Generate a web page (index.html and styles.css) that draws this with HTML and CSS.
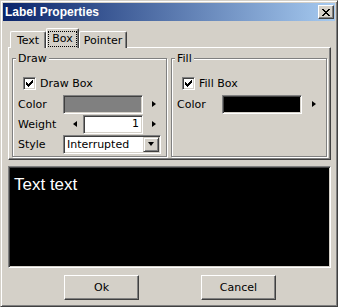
FILE: index.html
```html
<!DOCTYPE html>
<html lang="en">
<head>
  <meta charset="UTF-8" />
  <title>Label Properties</title>
  <link rel="stylesheet" href="styles.css">
</head>
<body>

<div class="window">
  <div class="titlebar">
    <span class="title">Label Properties</span>
    <button class="close">
      <svg width="8" height="7" viewBox="0 0 8 7" shape-rendering="crispEdges">
        <path d="M0 0h2v1H0z M1 1h2v1H1z M2 2h1v1H2z M3 3h2v1H3z M2 4h1v1H2z M1 5h2v1H1z M0 6h2v1H0z M6 0h2v1H6z M5 1h2v1H5z M5 2h1v1H5z M5 4h1v1H5z M5 5h2v1H5z M6 6h2v1H6z M2 2h4v1H2z M2 4h4v1H2z" fill="#000"/>
      </svg>
    </button>
  </div>

  <div class="client">
    <div class="tabs">
      <div class="tab tab-text">Text</div>
      <div class="tab tab-box tab-active"><span class="focus">Box</span></div>
      <div class="tab tab-pointer">Pointer</div>
    </div>

    <div class="panel">
      <fieldset class="group">
        <legend>Draw</legend>
        <div class="check-row">
          <span class="cb">
            <svg width="7" height="7" viewBox="0 0 7 7" shape-rendering="crispEdges"><path d="M0 2h1v3H0z M1 3h1v3H1z M2 4h1v3H2z M3 3h1v3H3z M4 2h1v3H4z M5 1h1v3H5z M6 0h1v3H6z" fill="#000"/></svg>
          </span>
          Draw Box
        </div>
        <div class="row">
          <span class="lbl">Color</span>
          <span class="sunken swatch swatch-gray"></span>
          <span class="arr arr-r"></span>
        </div>
        <div class="row">
          <span class="lbl">Weight</span>
          <span class="arr arr-l"></span>
          <span class="sunken field num">1</span>
          <span class="arr arr-r"></span>
        </div>
        <div class="row">
          <span class="lbl">Style</span>
          <span class="sunken field select">
            Interrupted
            <span class="drop"><span class="tri-down"></span></span>
          </span>
        </div>
      </fieldset>

      <fieldset class="group">
        <legend>Fill</legend>
        <div class="check-row">
          <span class="cb">
            <svg width="7" height="7" viewBox="0 0 7 7" shape-rendering="crispEdges"><path d="M0 2h1v3H0z M1 3h1v3H1z M2 4h1v3H2z M3 3h1v3H3z M4 2h1v3H4z M5 1h1v3H5z M6 0h1v3H6z" fill="#000"/></svg>
          </span>
          Fill Box
        </div>
        <div class="row">
          <span class="lbl">Color</span>
          <span class="sunken swatch swatch-black"></span>
          <span class="arr arr-r arr-fill"></span>
        </div>
      </fieldset>
    </div>

    <div class="sunken preview">Text text</div>

    <div class="buttons">
      <button class="btn">Ok</button>
      <button class="btn">Cancel</button>
    </div>
  </div>
</div>

</body>
</html>
```

FILE: styles.css
```css
body {
  margin: 0;
  font-family: "DejaVu Sans", sans-serif;
  font-size: 11px;
  color: #000;
}
.window {
  width: 338px;
  height: 307px;
  box-sizing: border-box;
  background: #d4d0c8;
  border: 1px solid;
  border-color: #d4d0c8 #404040 #404040 #d4d0c8;
  box-shadow: inset 1px 1px #fff, inset -1px -1px #808080;
  padding: 2px;
}
.titlebar {
  height: 18px;
  box-sizing: border-box;
  display: flex;
  align-items: center;
  justify-content: space-between;
  padding: 0 1px 0 2px;
  background: linear-gradient(to right, #0a246a, #a6caf0);
  color: #fff;
  font: bold 12px "Liberation Sans", sans-serif;
}
.close {
  width: 16px;
  height: 14px;
  box-sizing: border-box;
  padding: 0;
  background: #d4d0c8;
  border: 1px solid;
  border-color: #fff #404040 #404040 #fff;
  box-shadow: inset -1px -1px #808080;
  display: flex;
  align-items: center;
  justify-content: center;
}
.client {
  padding: 7px 4px 0 5px;
}

/* tabs */
.tabs {
  display: flex;
  align-items: flex-end;
  padding-left: 2px;
  margin-bottom: -1px;
}
.tab {
  height: 17px;
  box-sizing: border-box;
  border: 1px solid;
  border-bottom: 0;
  border-color: #fff #404040 #fff #fff;
  border-radius: 2px 2px 0 0;
  box-shadow: inset -1px 0 #808080;
  background: #d4d0c8;
  text-align: center;
  padding-top: 2px;
  line-height: 13px;
}
.tab-text { width: 36px; }
.tab-box { width: 33px; }
.tab-pointer { width: 48px; }
.tab-active {
  height: 20px;
  position: relative;
  z-index: 1;
  padding: 2px 1px 0;
}
.focus {
  display: block;
  height: 16px;
  box-sizing: border-box;
  border: 1px dotted #000;
  line-height: 11px;
  padding-top: 1px;
}

/* panel with group boxes */
.panel {
  border: 1px solid;
  border-color: #fff #404040 #404040 #fff;
  box-shadow: inset -1px -1px #808080;
  padding: 4px 4px 2px 3px;
  display: grid;
  grid-template-columns: 155px 156px;
  column-gap: 4px;
}
.group {
  margin: 0;
  min-width: 0;
  padding: 0 4px 2px 5px;
  border: 1px solid #808080;
  box-shadow: inset 1px 1px #fff, 1px 1px #fff;
}
.group legend {
  margin-left: -2px;
  padding: 0 2px;
  line-height: 13px;
  background: #d4d0c8;
}
.check-row {
  display: flex;
  align-items: center;
  height: 17px;
  margin: 10px 0 2px 5px;
}
.row {
  display: flex;
  align-items: center;
  height: 20px;
}
.lbl {
  width: 45px;
}

.sunken {
  box-sizing: border-box;
  border: 1px solid;
  border-color: #808080 #fff #fff #808080;
  box-shadow: inset 1px 1px #404040, inset -1px -1px #d4d0c8;
}
.cb {
  width: 13px;
  height: 13px;
  box-sizing: border-box;
  border: 1px solid;
  border-color: #808080 #fff #fff #808080;
  box-shadow: inset 1px 1px #404040, inset -1px -1px #d4d0c8;
  background: #fff;
  margin-right: 4px;
  display: flex;
  align-items: center;
  justify-content: center;
}
.swatch {
  width: 80px;
  height: 19px;
}
.swatch-gray { background: #808080; }
.swatch-black { background: #000; }

.field {
  height: 19px;
  background: #fff;
  line-height: 15px;
}
.num {
  width: 60px;
  margin-left: 6px;
  text-align: right;
  padding-right: 3px;
}
.select {
  width: 98px;
  display: flex;
  align-items: center;
  justify-content: space-between;
  padding: 0 1px 0 3px;
}
.drop {
  width: 16px;
  height: 15px;
  box-sizing: border-box;
  background: #d4d0c8;
  border: 1px solid;
  border-color: #d4d0c8 #404040 #404040 #d4d0c8;
  box-shadow: inset 1px 1px #fff, inset -1px -1px #808080;
  display: flex;
  align-items: center;
  justify-content: center;
}
.tri-down {
  width: 0;
  height: 0;
  border-top: 4px solid #000;
  border-left: 3.5px solid transparent;
  border-right: 3.5px solid transparent;
}

.arr {
  width: 0;
  height: 0;
  border-top: 3.5px solid transparent;
  border-bottom: 3.5px solid transparent;
}
.arr-r {
  border-left: 4px solid #000;
  margin-left: 9px;
}
.arr-l {
  border-right: 4px solid #000;
  margin-left: 10px;
}
.arr-fill {
  margin-left: 10px;
}

/* preview */
.preview {
  margin-top: 6px;
  height: 102px;
  padding: 8px 5px 0;
  background: #000;
  color: #fff;
  font: 17px/20px "Liberation Sans", sans-serif;
}

.buttons {
  display: flex;
  justify-content: center;
  gap: 62px;
  margin-top: 7px;
  padding-left: 1px;
}
.btn {
  width: 75px;
  height: 25px;
  font-family: "DejaVu Sans", sans-serif;
  font-size: 11px;
  color: #000;
  background: #d4d0c8;
  border: 1px solid;
  border-color: #fff #404040 #404040 #fff;
  box-shadow: inset -1px -1px #808080;
}
```
